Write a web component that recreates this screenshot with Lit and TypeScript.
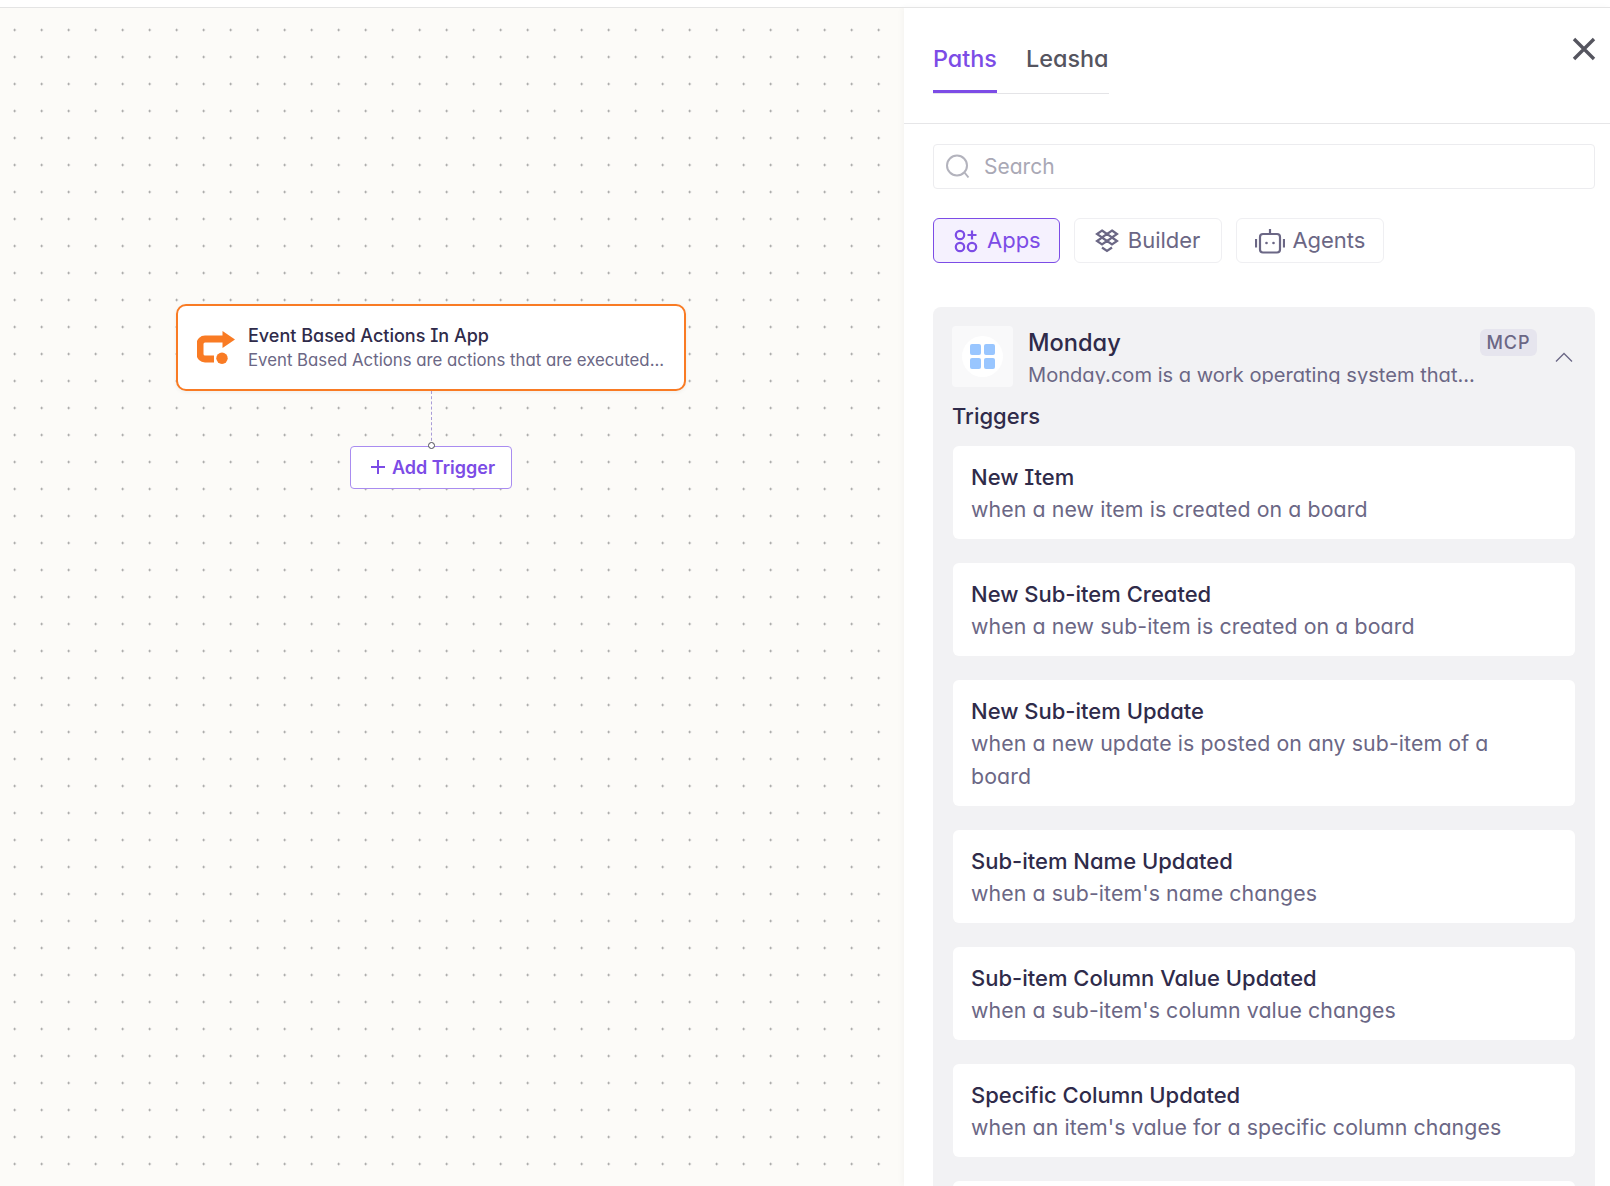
import { customElement } from 'lit/decorators.js';
import { css, html, LitElement, svg } from 'lit';
import { classMap } from 'lit/directives/class-map.js';

const triggers = [
  { title: 'New Item', desc: 'when a new item is created on a board' },
  { title: 'New Sub-item Created', desc: 'when a new sub-item is created on a board' },
  { title: 'New Sub-item Update', desc: 'when a new update is posted on any sub-item of a board' },
  { title: 'Sub-item Name Updated', desc: "when a sub-item's name changes" },
  { title: 'Sub-item Column Value Updated', desc: "when a sub-item's column value changes" },
  { title: 'Specific Column Updated', desc: "when an item's value for a specific column changes" },
  { title: '', desc: '' },
];

const appsIcon = svg`
  <circle cx="6" cy="6" r="4.2" /><circle cx="6" cy="18" r="4.2" /><circle cx="18" cy="18" r="4.2" />
  <path d="M18 1.500v9M13.500 6h9" />`;
const builderIcon = svg`
  <path d="M7 1.500 12 5l-5 3.500L2 5zM17 1.500 22 5l-5 3.500L12 5zM7 8.500l5 3.500-5 3.500L2 12zM17 8.500l5 3.500-5 3.500-5-3.500z" />
  <path d="M7 18.500l5 3.500 5-3.500" />`;
const agentsIcon = svg`
  <rect x="5" y="6" width="20" height="18.500" rx="3" />
  <path d="M15 6V1M1 11v8.500M29 11v8.500" />
  <circle cx="11.500" cy="15" r="1.300" fill="currentColor" stroke="none" />
  <circle cx="18.500" cy="15" r="1.300" fill="currentColor" stroke="none" />`;

@customElement('app-root')
export class AppRoot extends LitElement {
  static styles = css`
    :host {
      display: block;
      width: 1610px;
      height: 1186px;
      overflow: hidden;
      background: #fff;
      font-family: 'Inter', 'Liberation Sans', sans-serif;
      font-feature-settings: 'cv11', 'cv08';
      color: #6b6785;
    }

    .page {
      display: flex;
      height: 1186px;
      padding-top: 7px;
      box-sizing: border-box;
      position: relative;
    }

    .topline {
      position: absolute;
      top: 7px;
      left: 0;
      right: 0;
      height: 1px;
      background: #e4e4e4;
      z-index: 2;
    }

    .canvas {
      position: relative;
      width: 904px;
      flex: none;
      background-color: #fcfbf8;
      background-image: radial-gradient(circle, #858585 0.8px, transparent 1.2px);
      background-size: 27px 27px;
      background-position: 1.2px 9.5px;
    }

    .node {
      position: absolute;
      left: 176px;
      top: 297px;
      width: 510px;
      height: 87px;
      box-sizing: border-box;
      display: flex;
      align-items: center;
      gap: 13px;
      padding: 0 19px;
      background: #fff;
      border: 2px solid #f97b24;
      border-radius: 10px;
      box-shadow: 0 1px 4px rgba(0, 0, 0, 0.06);
    }

    .node-icon {
      flex: none;
      width: 38px;
      height: 33px;
    }

    .node-text {
      margin-top: -2px;
    }

    .node-title {
      font-size: 18px;
      line-height: 25px;
      font-weight: 500;
      color: #2f2b4a;
      white-space: nowrap;
      padding-top: 2px;
    }

    .node-desc {
      font-size: 16.8px;
      line-height: 24px;
      color: #6b6785;
      white-space: nowrap;
    }

    .wire {
      position: absolute;
      left: 431px;
      top: 384px;
      height: 55px;
      border-left: 1px dashed #a99cd8;
    }

    .port {
      position: absolute;
      left: 428px;
      top: 435px;
      width: 7px;
      height: 7px;
      box-sizing: border-box;
      border: 1.2px solid #4a4a55;
      border-radius: 50%;
      background: #fff;
      z-index: 1;
    }

    .add {
      position: absolute;
      left: 350px;
      top: 438.7px;
      width: 162px;
      height: 43.3px;
      box-sizing: border-box;
      display: flex;
      align-items: center;
      padding-left: 19px;
      gap: 6px;
      background: #fff;
      border: 1px solid #a98cf0;
      border-radius: 4px;
      color: #7c4ce6;
      font-size: 18px;
      font-weight: 600;
      white-space: nowrap;
    }

    .add svg {
      width: 16px;
      height: 16px;
      flex: none;
    }

    .panel {
      flex: 1;
      min-width: 0;
      background: #fff;
      box-shadow: -2px 0 6px rgba(0, 0, 0, 0.03);
      overflow: hidden;
      position: relative;
    }

    .head {
      height: 117px;
      box-sizing: border-box;
      border-bottom: 1px solid #e6e6e8;
      padding: 28px 0 0 29px;
    }

    .tabs {
      display: inline-flex;
      gap: 29px;
      height: 59px;
      box-sizing: border-box;
      border-bottom: 1px solid #e4e4e7;
    }

    .tab {
      font-size: 23.4px;
      line-height: 48px;
      height: 58px;
      box-sizing: border-box;
      font-weight: 500;
      color: #55555f;
    }

    .tab--on {
      color: #7c4ce6;
      border-bottom: 3px solid #7c4ce6;
    }

    .close {
      position: absolute;
      right: 14px;
      top: 29.5px;
      width: 24px;
      height: 24px;
    }

    .body {
      padding: 20px 15px 0 29px;
    }

    .search {
      height: 45px;
      box-sizing: border-box;
      border: 1px solid #ececef;
      border-radius: 4px;
      display: flex;
      align-items: center;
      gap: 14px;
      padding-left: 11px;
      color: #a9a8b5;
      font-size: 21px;
    }

    .search svg {
      width: 25px;
      height: 25px;
      flex: none;
    }

    .chips {
      display: flex;
      gap: 14px;
      margin-top: 29px;
    }

    .chip {
      height: 45px;
      box-sizing: border-box;
      display: flex;
      align-items: center;
      border: 1px solid #efeff2;
      border-radius: 6px;
      padding: 0 18px 0 20px;
      gap: 9px;
      font-size: 22px;
      color: #6b6785;
    }

    .chip-label {
      padding-bottom: 2px;
    }

    .chip svg {
      flex: none;
      fill: none;
      stroke: currentColor;
      stroke-width: 2.2;
    }

    .chip--on {
      background: #f5f1fe;
      border-color: #7c4ce6;
      color: #7c4ce6;
    }

    .chip--wide {
      padding-left: 18px;
      gap: 7px;
    }

    .chip--builder {
      padding-right: 21px;
    }

    .section {
      margin-top: 44px;
      padding: 19px 20px 0 19px;
      background: #f2f2f4;
      border-radius: 8px;
    }

    .section-head {
      display: flex;
      height: 61px;
    }

    .logo {
      flex: none;
      width: 61px;
      height: 61px;
      background: #f9f9fa;
      border-radius: 4px;
      display: flex;
      align-items: center;
      justify-content: center;
    }

    .logo-inner {
      width: 41px;
      height: 41px;
      border-radius: 50%;
      background: #fff;
      display: grid;
      grid-template-columns: 11px 11px;
      grid-auto-rows: 11px;
      gap: 3px;
      place-content: center;
    }

    .logo-inner span {
      background: #99c6ff;
      border-radius: 2px;
    }

    .section-text {
      flex: 1;
      min-width: 0;
      margin-left: 15px;
      height: 58px;
      overflow: hidden;
    }

    .section-title {
      font-size: 23.6px;
      line-height: 33px;
      font-weight: 500;
      color: #2f2b4a;
    }

    .section-desc {
      font-size: 20.1px;
      line-height: 32px;
      white-space: nowrap;
    }

    .badge {
      flex: none;
      align-self: flex-start;
      margin-top: 3px;
      height: 27px;
      width: 57px;
      display: flex;
      align-items: center;
      justify-content: center;
      background: #e6e5ee;
      border-radius: 6px;
      font-size: 18px;
      font-weight: 500;
      letter-spacing: 1px;
    }

    .chevron {
      flex: none;
      width: 18px;
      height: 10px;
      margin: 26px 2px 0 18px;
    }

    .group-title {
      font-size: 22px;
      line-height: 30px;
      font-weight: 500;
      color: #2f2b4a;
      margin: 13.5px 0 15px;
    }

    .items {
      display: flex;
      flex-direction: column;
      gap: 24px;
      margin-left: 1px;
    }

    .item {
      background: #fff;
      border-radius: 6px;
      padding: 16px 40px 13px 18px;
      min-height: 93px;
      box-sizing: border-box;
    }

    .item-title {
      font-size: 22px;
      line-height: 31px;
      font-weight: 500;
      color: #2f2b4a;
    }

    .item-desc {
      font-size: 21.3px;
      line-height: 33px;
      letter-spacing: 0.1px;
      color: #6b6785;
    }
  `;

  renderChip(label: string, icon: unknown, width: number, height: number, on = false) {
    const classes = {
      chip: true,
      'chip--on': on,
      'chip--wide': width > 24,
      'chip--builder': label === 'Builder',
    };
    return html`
      <div class=${classMap(classes)}>
        <svg viewBox="0 0 ${width} ${height}" width=${width} height=${height}>${icon}</svg>
        <span class="chip-label">${label}</span>
      </div>
    `;
  }

  render() {
    return html`
      <div class="page">
        <div class="topline"></div>
        <div class="canvas">
          <div class="node">
            <svg class="node-icon" viewBox="0 0 38 33">
              <path d="M27 8H8a5 5 0 0 0-5 5v10a5 5 0 0 0 5 5h9" fill="none" stroke="#f97b24" stroke-width="7" />
              <path d="M25.500 0 38 8.500 25.500 17z" fill="#f97b24" />
              <circle cx="25" cy="27.300" r="5.700" fill="#f97b24" />
            </svg>
            <div class="node-text">
              <div class="node-title">Event Based Actions In App</div>
              <div class="node-desc">Event Based Actions are actions that are executed...</div>
            </div>
          </div>
          <div class="wire"></div>
          <div class="port"></div>
          <div class="add">
            <svg viewBox="0 0 16 16"><path d="M8 1v14M1 8h14" stroke="#7c4ce6" stroke-width="2" fill="none" /></svg>
            Add Trigger
          </div>
        </div>

        <div class="panel">
          <div class="head">
            <div class="tabs">
              <div class="tab tab--on">Paths</div>
              <div class="tab">Leasha</div>
            </div>
          </div>
          <svg class="close" viewBox="0 0 24 24">
            <path d="M2 2l20 20M22 2 2 22" stroke="#55555f" stroke-width="3.4" fill="none" />
          </svg>
          <div class="body">
            <div class="search">
              <svg viewBox="0 0 25 25" fill="none" stroke="#b3b3bd" stroke-width="2">
                <circle cx="12" cy="11.500" r="10" /><path d="M19.500 18.500l4 5" />
              </svg>
              Search
            </div>
            <div class="chips">
              ${this.renderChip('Apps', appsIcon, 24, 24, true)}
              ${this.renderChip('Builder', builderIcon, 24, 24)}
              ${this.renderChip('Agents', agentsIcon, 30, 26)}
            </div>
            <div class="section">
              <div class="section-head">
                <div class="logo">
                  <div class="logo-inner"><span></span><span></span><span></span><span></span></div>
                </div>
                <div class="section-text">
                  <div class="section-title">Monday</div>
                  <div class="section-desc">Monday.com is a work operating system that...</div>
                </div>
                <div class="badge">MCP</div>
                <svg class="chevron" viewBox="0 0 18 10">
                  <path d="M1 9.500 9 1.500l8 8" stroke="#6b6785" stroke-width="1.300" fill="none" />
                </svg>
              </div>
              <div class="group-title">Triggers</div>
              <div class="items">
                ${triggers.map(
                  (t) => html`
                    <div class="item">
                      <div class="item-title">${t.title}</div>
                      <div class="item-desc">${t.desc}</div>
                    </div>
                  `
                )}
              </div>
            </div>
          </div>
        </div>
      </div>
    `;
  }
}
